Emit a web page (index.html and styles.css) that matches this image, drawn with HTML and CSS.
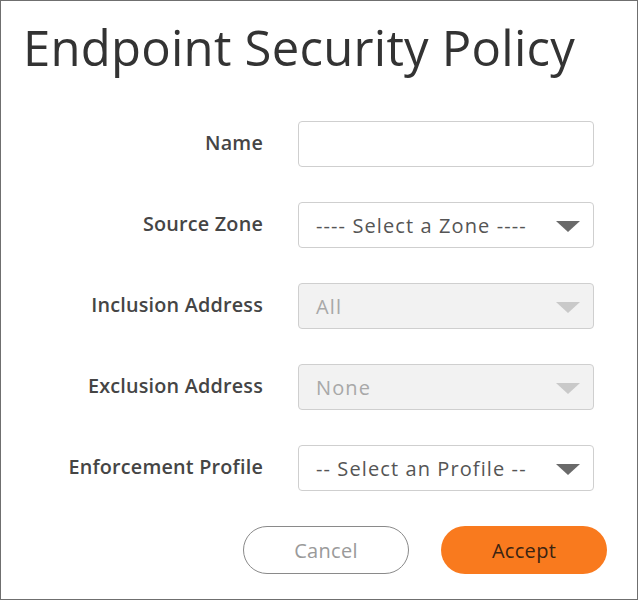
FILE: index.html
```html
<!DOCTYPE html>
<html>
<head>
<meta charset="utf-8">
<link rel="stylesheet" href="styles.css">
</head>
<body>
<div class="dialog">
  <h1 class="title">Endpoint Security Policy</h1>
  <form class="form">
    <label class="label">Name</label>
    <div class="field"></div>

    <label class="label">Source Zone</label>
    <div class="field select"><span class="value">---- Select a Zone ----</span><span class="arrow"></span></div>

    <label class="label">Inclusion Address</label>
    <div class="field select disabled"><span class="value">All</span><span class="arrow"></span></div>

    <label class="label">Exclusion Address</label>
    <div class="field select disabled"><span class="value">None</span><span class="arrow"></span></div>

    <label class="label">Enforcement Profile</label>
    <div class="field select"><span class="value">-- Select an Profile --</span><span class="arrow"></span></div>
  </form>
  <div class="actions">
    <button class="btn btn-cancel" type="button">Cancel</button>
    <button class="btn btn-accept" type="button">Accept</button>
  </div>
</div>
</body>
</html>
```

FILE: styles.css
```css
html, body {
  margin: 0;
  padding: 0;
  background: #ffffff;
}
body {
  width: 640px;
  height: 601px;
  overflow: hidden;
}
.dialog {
  box-sizing: border-box;
  width: 638px;
  height: 600px;
  border: 1px solid #6f6f6f;
  padding: 18px 0 0 0;
  font-family: "Open Sans", sans-serif;
}
.title {
  margin: 0 0 0 22px;
  font-family: "Open Sans", sans-serif;
  font-weight: 400;
  font-size: 49px;
  line-height: 56px;
  color: #333333;
  letter-spacing: 0.25px;
}
.form {
  margin-top: 46px;
  display: grid;
  grid-template-columns: 262px 296px;
  column-gap: 35px;
  row-gap: 35px;
  align-items: center;
}
.label {
  text-align: right;
  font-weight: 600;
  font-size: 19.8px;
  letter-spacing: 0.2px;
  color: #454545;
  padding-bottom: 3px;
}
.field {
  box-sizing: border-box;
  height: 46px;
  border: 1px solid #cfcfcf;
  border-radius: 4px;
  background: #ffffff;
}
.select {
  display: flex;
  align-items: center;
  justify-content: space-between;
  padding: 0 13px 0 17px;
}
.value {
  font-family: "Open Sans", sans-serif;
  font-size: 20px;
  letter-spacing: 1.1px;
  color: #555555;
  margin-top: 1px;
}
.arrow {
  width: 0;
  height: 0;
  border-left: 12px solid transparent;
  border-right: 12px solid transparent;
  border-top: 11px solid #6a6a6a;
  margin-top: 2px;
}
.disabled {
  background: #f2f2f2;
}
.disabled .value {
  color: #a8a8a8;
}
.disabled .arrow {
  border-top-color: #c9c9c9;
}
.actions {
  margin-top: 35px;
  display: flex;
  justify-content: flex-end;
  gap: 32px;
  padding-right: 30px;
}
.btn {
  box-sizing: border-box;
  width: 166px;
  height: 48px;
  border-radius: 24px;
  font-family: "Open Sans", sans-serif;
  font-size: 20px;
  letter-spacing: 0.3px;
  cursor: pointer;
}
.btn-cancel {
  background: #ffffff;
  border: 1px solid #8a8a8a;
  color: #9a9a9a;
}
.btn-accept {
  background: #f97a1e;
  border: none;
  color: #3b2412;
}
```
